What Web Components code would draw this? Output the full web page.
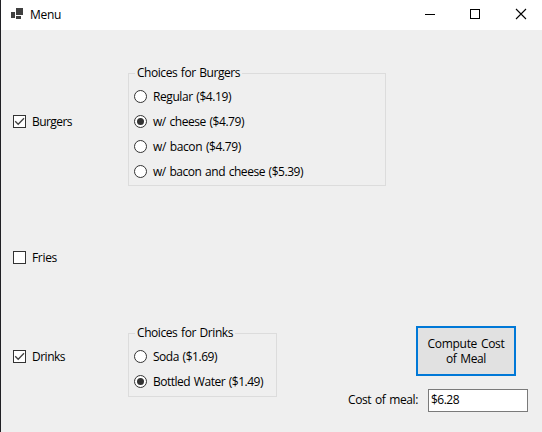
<!DOCTYPE html>
<html lang="en">
<head>
<meta charset="utf-8">
<title>Menu</title>
<style>
html,body{margin:0;height:100%;overflow:hidden;background:#efefef}
body{font:12px/16px "Open Sans","Noto Sans",sans-serif;color:#000}
.client{display:grid;grid-template-columns:115px 1fr;grid-template-rows:113px 147px 64px;padding:43px 14px 0 12px}
.pick{align-self:start}
.burgers{margin-top:40px}.fries{margin-top:63px}.drinks{margin-top:15px}
.last{display:flex;justify-content:space-between;align-items:flex-start}
.total{display:flex;flex-direction:column;align-items:flex-end;gap:13px;margin-top:-7px}
.cost{display:flex;align-items:flex-start;gap:10px}
.cost > fit-text{margin-top:3px}
menu-button{margin-right:12px}
</style>
</head>
<body>
<app-window>
  <div class="client">
    <check-option class="pick burgers" checked><fit-text w="40">Burgers</fit-text></check-option>
    <group-box style="width:258px;height:113px">
      <fit-text slot="legend" w="103">Choices for Burgers</fit-text>
      <radio-option><fit-text w="78">Regular ($4.19)</fit-text></radio-option>
      <radio-option checked><fit-text w="91">w/ cheese ($4.79)</fit-text></radio-option>
      <radio-option><fit-text w="88">w/ bacon ($4.79)</fit-text></radio-option>
      <radio-option><fit-text w="150">w/ bacon and cheese ($5.39)</fit-text></radio-option>
    </group-box>
    <check-option class="pick fries"><fit-text w="25">Fries</fit-text></check-option>
    <span></span>
    <check-option class="pick drinks" checked><fit-text w="33">Drinks</fit-text></check-option>
    <div class="last">
      <group-box style="width:149px;height:64px">
        <fit-text slot="legend" w="96">Choices for Drinks</fit-text>
        <radio-option><fit-text w="64">Soda ($1.69)</fit-text></radio-option>
        <radio-option checked><fit-text w="110">Bottled Water ($1.49)</fit-text></radio-option>
      </group-box>
      <div class="total">
        <menu-button><fit-text w="77">Compute Cost</fit-text><fit-text w="40">of Meal</fit-text></menu-button>
        <div class="cost"><fit-text w="70">Cost of meal:</fit-text><value-box><fit-text w="28">$6.28</fit-text></value-box></div>
      </div>
    </div>
  </div>
</app-window>
<script>
const shadow = (el, html) => { el.attachShadow({mode:'open'}).innerHTML = html; };

// A single line of text spaced to a given width.
customElements.define('fit-text', class extends HTMLElement {
  connectedCallback() {
    shadow(this, `<style>:host{display:block;height:16px;white-space:pre;word-spacing:1px}span{display:inline-block}</style><span><slot></slot></span>`);
    const span = this.shadowRoot.querySelector('span'), w = +this.getAttribute('w');
    this.style.width = w + 'px';
    span.style.letterSpacing = (w - span.getBoundingClientRect().width) / this.textContent.length + 'px';
  }
});

customElements.define('app-window', class extends HTMLElement {
  connectedCallback() {
    shadow(this, `<style>
      :host{display:block;box-sizing:border-box;height:432px;border-left:1px solid #202024;background:#efefef}
      header{display:flex;align-items:center;height:30px;background:#fff;padding-left:9px}
      .icon{margin-right:6px}
      .buttons{margin-left:auto}
      svg{display:block}
    </style>
    <header>
      <svg class="icon" width="14" height="14" shape-rendering="crispEdges" fill="#404040"><path d="M6 0h7v7H6zM1 4h4v6H1zM6 8h5v3H6z"/></svg>
      <fit-text w="31">Menu</fit-text>
      <svg class="buttons" width="127" height="30" fill="none" stroke="#000"><path d="M10 14.5h10M55.5 9.5h9v9h-9z" shape-rendering="crispEdges"/><path d="M101 9l10 10M111 9l-10 10" stroke-width="1.1"/></svg>
    </header><slot></slot>`);
  }
});

customElements.define('check-option', class extends HTMLElement {
  connectedCallback() {
    shadow(this, `<style>:host{display:flex;align-items:center;gap:6px;height:17px}svg{display:block}</style>
      <svg width="13" height="13"><rect x=".5" y=".5" width="12" height="12" fill="#fff" stroke="#333"/>
      ${this.hasAttribute('checked') ? '<path d="M2.2 6.3l3 3 5.8-6" fill="none" stroke="#404040" stroke-width="1.3"/>' : ''}</svg><slot></slot>`);
  }
});

customElements.define('radio-option', class extends HTMLElement {
  connectedCallback() {
    shadow(this, `<style>:host{display:flex;align-items:center;gap:6px;height:25px}svg{display:block}</style>
      <svg width="13" height="13"><circle cx="6.5" cy="6.5" r="6" fill="#fff" stroke="#333"/>
      ${this.hasAttribute('checked') ? '<circle cx="6.5" cy="6.5" r="3.5" fill="#333"/>' : ''}</svg><slot></slot>`);
  }
});

customElements.define('group-box', class extends HTMLElement {
  connectedCallback() {
    shadow(this, `<style>
      :host{display:block;box-sizing:border-box;border:1px solid #dcdcdc;padding:0 0 0 5px}
      .legend{width:max-content;height:16px;margin:-9px 0 3px 1px;padding:0 2px;background:#efefef}
    </style><div class="legend"><slot name="legend"></slot></div><slot></slot>`);
  }
});

customElements.define('menu-button', class extends HTMLElement {
  connectedCallback() {
    shadow(this, `<style>:host{display:flex;flex-direction:column;align-items:center;justify-content:center;box-sizing:border-box;width:100px;height:50px;border:2px solid #0078d7;background:#e1e1e1;line-height:15px}::slotted(fit-text){height:15px!important}</style><slot></slot>`);
  }
});

customElements.define('value-box', class extends HTMLElement {
  connectedCallback() {
    shadow(this, `<style>:host{display:block;box-sizing:border-box;width:100px;height:23px;border:1px solid #7a7a7a;background:#fff;padding:2px}</style><slot></slot>`);
  }
});
</script>
</body>
</html>
